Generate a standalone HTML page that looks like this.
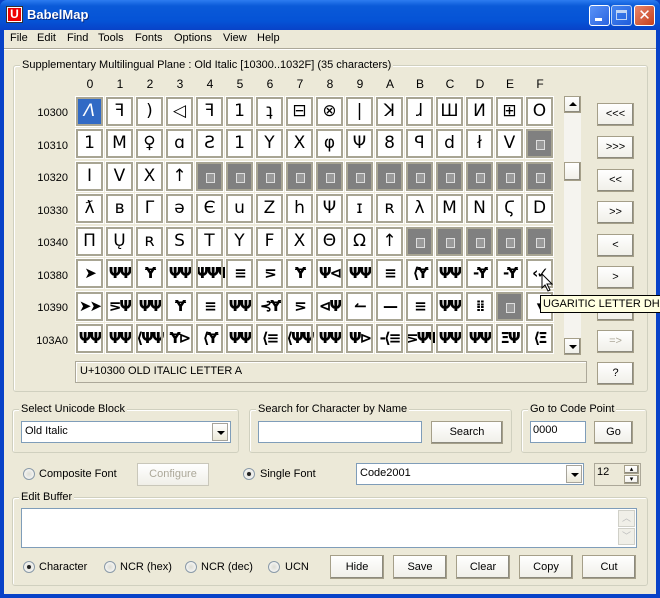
<!DOCTYPE html>
<html><head><meta charset="utf-8"><style>
*{box-sizing:border-box;margin:0;padding:0}
body{width:660px;height:598px;overflow:hidden;background:#0842c8;font-family:"Liberation Sans","DejaVu Sans",sans-serif;font-size:11px;color:#000;position:relative}
.a{position:absolute}
#title{left:0;top:0;width:660px;height:30px;background:linear-gradient(#2d7cf0,#0a5ad8 20%,#0553d6 70%,#0842c8);border-radius:7px 7px 0 0}
#body{left:4px;top:30px;width:652px;height:564px;background:#ece9d8}
.tb{top:5px;width:21px;height:21px;border:1px solid #fff;border-radius:3px;background:linear-gradient(135deg,#5a93f7,#2a63e0)}
.grp{border:1px solid #d0d0bf;border-radius:3px;box-shadow:inset 1px 1px 0 #fff}
.gl{background:#ece9d8;padding:0 2px;white-space:nowrap}
.cell{position:absolute;width:29px;height:31px;border:1px solid #fff;outline:2px solid #a8a593;outline-offset:-3px;background:#fff;text-align:center;line-height:29px;font-family:"DejaVu Sans",sans-serif;font-size:17px}
.g{background:#808080;box-shadow:inset 0 0 0 2px #fff}
.g::after{content:"";position:absolute;left:10px;top:11px;width:7px;height:8px;border:1px solid #ddd;background:#999}
.bb{position:absolute;border:1px solid #a59f89;background:linear-gradient(#fff,#f0efe8);box-shadow:inset -1px -1px 0 #8c8a7e;text-align:center}
.in{position:absolute;background:#fff;border:1px solid #7f9db9}
.rl{position:absolute;width:50px;text-align:right}
.rad{position:absolute;width:12px;height:12px;border-radius:50%;border:1px solid #8a9aa8;background:radial-gradient(#dcdcd4,#fff)}
.rad.on::after{content:"";position:absolute;left:3px;top:3px;width:4px;height:4px;border-radius:50%;background:#222}
.dd{position:absolute;width:16px;background:linear-gradient(#fff,#ece9d8);border:1px solid #a6a39a;}
.dd::after{content:"";position:absolute;left:4px;top:7px;border:4px solid transparent;border-top:4px solid #000;border-bottom:0}
.cu{font-weight:bold;font-size:15px;letter-spacing:-2px}
</style></head><body>
<div id="title" class="a"></div>
<div class="a" style="left:6px;top:6px;width:17px;height:17px;background:#fff;border:1px solid #333"><div style="margin:1px;background:#e00;height:13px;color:#fff;font-weight:bold;font-size:12px;line-height:13px;text-align:center">U</div></div>
<div class="a" style="left:27px;top:7px;color:#fff;font-weight:bold;font-size:13px;text-shadow:1px 1px 0 #0a2a80">BabelMap</div>
<div class="a tb" style="left:589px"><div style="position:absolute;left:5px;top:12px;width:7px;height:3px;background:#fff"></div></div>
<div class="a tb" style="left:611px;opacity:.75"><div style="position:absolute;left:4px;top:4px;width:11px;height:10px;border:1px solid #fff;border-top-width:3px"></div></div>
<div class="a tb" style="left:634px;background:linear-gradient(135deg,#e8866c,#c4401c)"><div style="position:absolute;left:0;top:0;width:19px;line-height:19px;text-align:center;color:#fff;font-weight:bold;font-size:15px">✕</div></div>
<div id="body" class="a"></div>
<div class="a" style="left:4px;top:48px;width:652px;height:2px;border-top:1px solid #aca899;border-bottom:1px solid #fff"></div>
<div class="a" style="top:32px;left:10px">File</div>
<div class="a" style="top:32px;left:37px">Edit</div>
<div class="a" style="top:32px;left:67px">Find</div>
<div class="a" style="top:32px;left:98px">Tools</div>
<div class="a" style="top:32px;left:135px">Fonts</div>
<div class="a" style="top:32px;left:174px">Options</div>
<div class="a" style="top:32px;left:223px">View</div>
<div class="a" style="top:32px;left:257px">Help</div>

<div class="a grp" style="left:13px;top:65px;width:635px;height:327px"></div>
<div class="a gl" style="left:20px;top:59px">Supplementary Multilingual Plane : Old Italic [10300..1032F] (35 characters)</div>
<div class="a" style="top:77px;left:75px;width:480px;display:flex;font-size:12px"><span style="flex:1;text-align:center">0</span><span style="flex:1;text-align:center">1</span><span style="flex:1;text-align:center">2</span><span style="flex:1;text-align:center">3</span><span style="flex:1;text-align:center">4</span><span style="flex:1;text-align:center">5</span><span style="flex:1;text-align:center">6</span><span style="flex:1;text-align:center">7</span><span style="flex:1;text-align:center">8</span><span style="flex:1;text-align:center">9</span><span style="flex:1;text-align:center">A</span><span style="flex:1;text-align:center">B</span><span style="flex:1;text-align:center">C</span><span style="flex:1;text-align:center">D</span><span style="flex:1;text-align:center">E</span><span style="flex:1;text-align:center">F</span></div>
<div class="rl" style="left:18px;top:107px">10300</div>
<div class="rl" style="left:18px;top:140px">10310</div>
<div class="rl" style="left:18px;top:172px">10320</div>
<div class="rl" style="left:18px;top:205px">10330</div>
<div class="rl" style="left:18px;top:237px">10340</div>
<div class="rl" style="left:18px;top:270px">10380</div>
<div class="rl" style="left:18px;top:302px">10390</div>
<div class="rl" style="left:18px;top:335px">103A0</div>

<div class="a" style="left:75px;top:96px;width:480px;height:260px">
<div class="cell" style="left:0;top:0;background:#316ac5;color:#fff;font-style:italic">Λ</div>
<div class="cell" style="left:30px;top:0">ꟻ</div><div class="cell" style="left:60px;top:0">)</div><div class="cell" style="left:90px;top:0">◁</div><div class="cell" style="left:120px;top:0">ꟻ</div><div class="cell" style="left:150px;top:0">1</div><div class="cell" style="left:180px;top:0">ʇ</div><div class="cell" style="left:210px;top:0">⊟</div><div class="cell" style="left:240px;top:0">⊗</div><div class="cell" style="left:270px;top:0">|</div><div class="cell" style="left:300px;top:0">ꓘ</div><div class="cell" style="left:330px;top:0">ɺ</div><div class="cell" style="left:360px;top:0">Ш</div><div class="cell" style="left:390px;top:0">И</div><div class="cell" style="left:420px;top:0">⊞</div><div class="cell" style="left:450px;top:0">O</div>
<div class="cell" style="left:0;top:32px">1</div><div class="cell" style="left:30px;top:32px">M</div><div class="cell" style="left:60px;top:32px">♀</div><div class="cell" style="left:90px;top:32px">ɑ</div><div class="cell" style="left:120px;top:32px">Ƨ</div><div class="cell" style="left:150px;top:32px">1</div><div class="cell" style="left:180px;top:32px">Y</div><div class="cell" style="left:210px;top:32px">X</div><div class="cell" style="left:240px;top:32px">φ</div><div class="cell" style="left:270px;top:32px">Ψ</div><div class="cell" style="left:300px;top:32px">8</div><div class="cell" style="left:330px;top:32px">ꟼ</div><div class="cell" style="left:360px;top:32px">d</div><div class="cell" style="left:390px;top:32px">ł</div><div class="cell" style="left:420px;top:32px">V</div><div class="cell g" style="left:450px;top:32px"></div>
<div class="cell" style="left:0;top:65px">I</div><div class="cell" style="left:30px;top:65px">V</div><div class="cell" style="left:60px;top:65px">X</div><div class="cell" style="left:90px;top:65px">↑</div>
<div class="cell g" style="left:120px;top:65px"></div><div class="cell g" style="left:150px;top:65px"></div><div class="cell g" style="left:180px;top:65px"></div><div class="cell g" style="left:210px;top:65px"></div><div class="cell g" style="left:240px;top:65px"></div><div class="cell g" style="left:270px;top:65px"></div><div class="cell g" style="left:300px;top:65px"></div><div class="cell g" style="left:330px;top:65px"></div><div class="cell g" style="left:360px;top:65px"></div><div class="cell g" style="left:390px;top:65px"></div><div class="cell g" style="left:420px;top:65px"></div><div class="cell g" style="left:450px;top:65px"></div>
<div class="cell" style="left:0;top:97px">ƛ</div><div class="cell" style="left:30px;top:97px">ʙ</div><div class="cell" style="left:60px;top:97px">Γ</div><div class="cell" style="left:90px;top:97px">ə</div><div class="cell" style="left:120px;top:97px">Є</div><div class="cell" style="left:150px;top:97px">u</div><div class="cell" style="left:180px;top:97px">Z</div><div class="cell" style="left:210px;top:97px">h</div><div class="cell" style="left:240px;top:97px">Ψ</div><div class="cell" style="left:270px;top:97px">ɪ</div><div class="cell" style="left:300px;top:97px">ʀ</div><div class="cell" style="left:330px;top:97px">λ</div><div class="cell" style="left:360px;top:97px">M</div><div class="cell" style="left:390px;top:97px">N</div><div class="cell" style="left:420px;top:97px">Ϛ</div><div class="cell" style="left:450px;top:97px">D</div>
<div class="cell" style="left:0;top:130px">Π</div><div class="cell" style="left:30px;top:130px">Ų</div><div class="cell" style="left:60px;top:130px">ʀ</div><div class="cell" style="left:90px;top:130px">S</div><div class="cell" style="left:120px;top:130px">T</div><div class="cell" style="left:150px;top:130px">Y</div><div class="cell" style="left:180px;top:130px">F</div><div class="cell" style="left:210px;top:130px">X</div><div class="cell" style="left:240px;top:130px">Θ</div><div class="cell" style="left:270px;top:130px">Ω</div><div class="cell" style="left:300px;top:130px">↑</div>
<div class="cell g" style="left:330px;top:130px"></div><div class="cell g" style="left:360px;top:130px"></div><div class="cell g" style="left:390px;top:130px"></div><div class="cell g" style="left:420px;top:130px"></div><div class="cell g" style="left:450px;top:130px"></div>
<div class="cell cu" style="left:0;top:162px">➤</div><div class="cell cu" style="left:30px;top:162px">ΨΨ</div><div class="cell cu" style="left:60px;top:162px">Ɏ</div><div class="cell cu" style="left:90px;top:162px">ΨΨ</div><div class="cell cu" style="left:120px;top:162px">ΨΨΨ</div><div class="cell cu" style="left:150px;top:162px">≡</div><div class="cell cu" style="left:180px;top:162px">⋝</div><div class="cell cu" style="left:210px;top:162px">Ɏ</div><div class="cell cu" style="left:240px;top:162px">Ψ⊲</div><div class="cell cu" style="left:270px;top:162px">ΨΨ</div><div class="cell cu" style="left:300px;top:162px">≡</div><div class="cell cu" style="left:330px;top:162px">⟨Ɏ</div><div class="cell cu" style="left:360px;top:162px">ΨΨ</div><div class="cell cu" style="left:390px;top:162px">-Ɏ</div><div class="cell cu" style="left:420px;top:162px">-Ɏ</div><div class="cell cu" style="left:450px;top:162px">‹✓</div>
<div class="cell cu" style="left:0;top:195px">➤➤</div><div class="cell cu" style="left:30px;top:195px">⋝Ψ</div><div class="cell cu" style="left:60px;top:195px">ΨΨ</div><div class="cell cu" style="left:90px;top:195px">Ɏ</div><div class="cell cu" style="left:120px;top:195px">≡</div><div class="cell cu" style="left:150px;top:195px">ΨΨ</div><div class="cell cu" style="left:180px;top:195px">⊰Ɏ</div><div class="cell cu" style="left:210px;top:195px">⋝</div><div class="cell cu" style="left:240px;top:195px">⊲Ψ</div><div class="cell cu" style="left:270px;top:195px">↼</div><div class="cell cu" style="left:300px;top:195px">—</div><div class="cell cu" style="left:330px;top:195px">≡</div><div class="cell cu" style="left:360px;top:195px">ΨΨ</div><div class="cell cu" style="left:390px;top:195px">⁞⁞</div><div class="cell g" style="left:420px;top:195px"></div><div class="cell cu" style="left:450px;top:195px">▾</div>
<div class="cell cu" style="left:0;top:227px">ΨΨ</div><div class="cell cu" style="left:30px;top:227px">ΨΨ</div><div class="cell cu" style="left:60px;top:227px">⟨ΨΨ</div><div class="cell cu" style="left:90px;top:227px">Ɏ⊳</div><div class="cell cu" style="left:120px;top:227px">⟨Ɏ</div><div class="cell cu" style="left:150px;top:227px">ΨΨ</div><div class="cell cu" style="left:180px;top:227px">⟨≡</div><div class="cell cu" style="left:210px;top:227px">⟨ΨΨ</div><div class="cell cu" style="left:240px;top:227px">ΨΨ</div><div class="cell cu" style="left:270px;top:227px">Ψ⊳</div><div class="cell cu" style="left:300px;top:227px">-⟨≡</div><div class="cell cu" style="left:330px;top:227px">⋝ΨΨ</div><div class="cell cu" style="left:360px;top:227px">ΨΨ</div><div class="cell cu" style="left:390px;top:227px">ΨΨ</div><div class="cell cu" style="left:420px;top:227px">ΞΨ</div><div class="cell cu" style="left:450px;top:227px">⟨Ξ</div>
</div>

<div class="a" style="left:564px;top:96px;width:17px;height:259px;background:#f5f4ef"></div>
<div class="bb" style="left:564px;top:96px;width:17px;height:17px"><div style="position:absolute;left:4px;top:5px;border:4px solid transparent;border-bottom:4px solid #000;border-top:0"></div></div>
<div class="bb" style="left:564px;top:162px;width:17px;height:19px"></div>
<div class="bb" style="left:564px;top:338px;width:17px;height:17px"><div style="position:absolute;left:4px;top:6px;border:4px solid transparent;border-top:4px solid #000;border-bottom:0"></div></div>

<div class="bb" style="left:597px;top:103px;width:37px;height:23px;line-height:21px">&lt;&lt;&lt;</div>
<div class="bb" style="left:597px;top:136px;width:37px;height:23px;line-height:21px">&gt;&gt;&gt;</div>
<div class="bb" style="left:597px;top:169px;width:37px;height:23px;line-height:21px">&lt;&lt;</div>
<div class="bb" style="left:597px;top:201px;width:37px;height:23px;line-height:21px">&gt;&gt;</div>
<div class="bb" style="left:597px;top:234px;width:37px;height:23px;line-height:21px">&lt;</div>
<div class="bb" style="left:597px;top:266px;width:37px;height:23px;line-height:21px">&gt;</div>
<div class="bb" style="left:597px;top:298px;width:37px;height:23px"></div>
<div class="bb" style="left:597px;top:330px;width:37px;height:23px;line-height:21px;color:#aca899">=&gt;</div>
<div class="bb" style="left:597px;top:362px;width:37px;height:23px;line-height:21px">?</div>

<div class="a" style="left:75px;top:361px;width:512px;height:22px;border:1px solid #aca899;box-shadow:inset 1px 1px 0 #fff;padding:3px 4px">U+10300 OLD ITALIC LETTER A</div>

<div class="a" style="left:540px;top:295px;width:122px;height:18px;background:#ffffe1;border:1px solid #000;padding:2px 2px;white-space:nowrap;font-size:11px">UGARITIC LETTER DHAL</div>
<svg class="a" style="left:541px;top:273px" width="12" height="20"><path d="M1 1 L1 15 L4 12 L7 18 L9 17 L6 11 L11 11 Z" fill="#fff" stroke="#000"/></svg>

<div class="a grp" style="left:12px;top:409px;width:227px;height:44px"></div>
<div class="a gl" style="left:19px;top:403px">Select Unicode Block</div>
<div class="in" style="left:21px;top:421px;width:210px;height:22px;padding:3px 3px">Old Italic</div>
<div class="dd" style="left:212px;top:423px;height:18px"></div>
<div class="a grp" style="left:249px;top:409px;width:263px;height:44px"></div>
<div class="a gl" style="left:256px;top:403px">Search for Character by Name</div>
<div class="in" style="left:258px;top:421px;width:164px;height:22px"></div>
<div class="bb" style="left:431px;top:421px;width:72px;height:23px;line-height:21px">Search</div>
<div class="a grp" style="left:521px;top:409px;width:126px;height:44px"></div>
<div class="a gl" style="left:528px;top:403px">Go to Code Point</div>
<div class="in" style="left:530px;top:421px;width:56px;height:22px;padding:2px 2px">0000</div>
<div class="bb" style="left:594px;top:421px;width:39px;height:23px;line-height:21px">Go</div>

<div class="rad" style="left:23px;top:468px"></div><div class="a" style="left:39px;top:468px">Composite Font</div>
<div class="bb" style="left:137px;top:463px;width:72px;height:23px;line-height:21px;color:#aca899;box-shadow:none;border-color:#c9c7ba">Configure</div>
<div class="rad on" style="left:243px;top:468px"></div><div class="a" style="left:260px;top:468px">Single Font</div>
<div class="in" style="left:356px;top:463px;width:228px;height:22px;padding:3px 3px">Code2001</div>
<div class="dd" style="left:566px;top:465px;height:18px"></div>
<div class="a" style="left:594px;top:463px;width:47px;height:23px;border:1px solid #aca899;padding:2px 2px">12</div>
<div class="bb" style="left:624px;top:465px;width:15px;height:9px;font-size:7px;line-height:7px">▴</div>
<div class="bb" style="left:624px;top:475px;width:15px;height:9px;font-size:7px;line-height:7px">▾</div>

<div class="a grp" style="left:12px;top:497px;width:636px;height:89px"></div>
<div class="a gl" style="left:19px;top:491px">Edit Buffer</div>
<div class="in" style="left:21px;top:508px;width:616px;height:40px"></div>
<div class="a" style="left:618px;top:510px;width:17px;height:17px;border:1px solid #d0d0c8;background:#f0efe8;color:#bbb;font-size:9px;text-align:center;line-height:15px">︿</div>
<div class="a" style="left:618px;top:528px;width:17px;height:17px;border:1px solid #d0d0c8;background:#f0efe8;color:#bbb;font-size:9px;text-align:center;line-height:15px">﹀</div>

<div class="rad on" style="left:23px;top:561px"></div><div class="a" style="left:39px;top:561px">Character</div>
<div class="rad" style="left:104px;top:561px"></div><div class="a" style="left:120px;top:561px">NCR (hex)</div>
<div class="rad" style="left:185px;top:561px"></div><div class="a" style="left:201px;top:561px">NCR (dec)</div>
<div class="rad" style="left:268px;top:561px"></div><div class="a" style="left:285px;top:561px">UCN</div>
<div class="bb" style="left:330px;top:555px;width:54px;height:24px;line-height:22px">Hide</div>
<div class="bb" style="left:393px;top:555px;width:54px;height:24px;line-height:22px">Save</div>
<div class="bb" style="left:456px;top:555px;width:54px;height:24px;line-height:22px">Clear</div>
<div class="bb" style="left:519px;top:555px;width:54px;height:24px;line-height:22px">Copy</div>
<div class="bb" style="left:582px;top:555px;width:54px;height:24px;line-height:22px">Cut</div>
</body></html>
